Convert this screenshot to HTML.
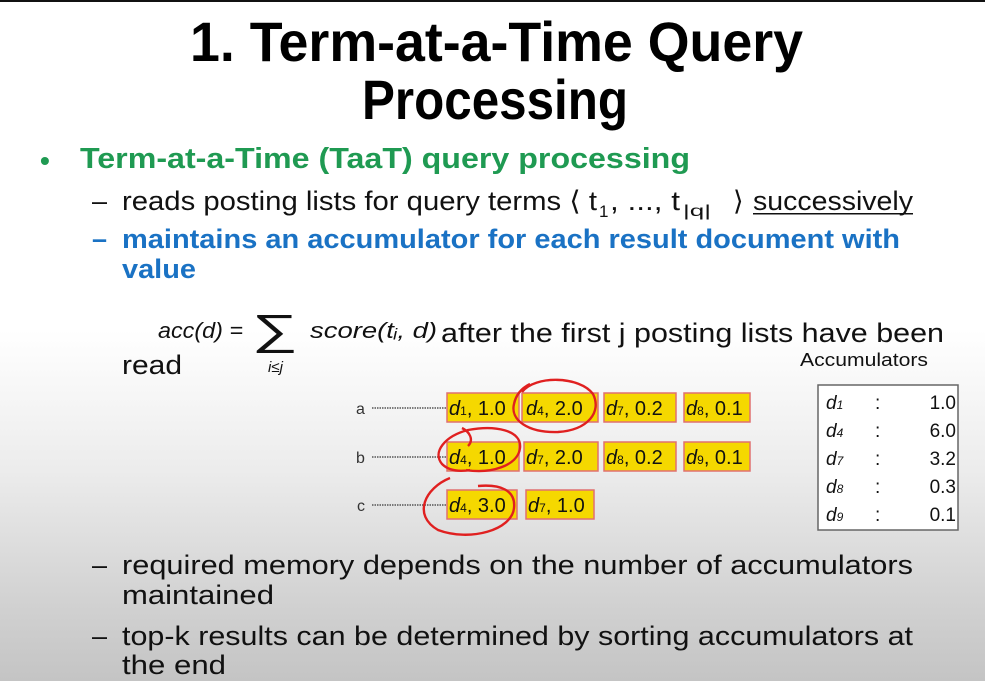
<!DOCTYPE html>
<html><head><style>
html,body{margin:0;padding:0;width:985px;height:681px;overflow:hidden}
body{background:linear-gradient(to bottom,#fff 0,#fff 330px,#ececec 470px,#d2d2d2 600px,#c4c4c4 681px);}
svg{position:absolute;left:0;top:0}
text{font-family:"Liberation Sans",sans-serif}
</style></head><body>
<svg width="985" height="681" viewBox="0 0 985 681">
<rect x="0" y="0" width="985" height="2" fill="#111"/>
<g font-weight="bold" fill="#000" font-size="56">
<text x="190" y="61" textLength="613" lengthAdjust="spacingAndGlyphs">1. Term-at-a-Time Query</text>
<text x="362" y="119" textLength="266" lengthAdjust="spacingAndGlyphs">Processing</text>
</g>
<text x="40" y="170" font-size="28" fill="#1f9a52" font-weight="bold">•</text>
<text x="80" y="168" font-size="29" fill="#1f9a52" font-weight="bold" textLength="610" lengthAdjust="spacingAndGlyphs">Term-at-a-Time (TaaT) query processing</text>
<g font-size="27" fill="#111">
<text x="92" y="210">–</text>
<text x="122" y="210" textLength="475" lengthAdjust="spacingAndGlyphs">reads posting lists for query terms ⟨ t</text>
<text x="599" y="217" font-size="17">1</text>
<text x="610" y="210" textLength="70" lengthAdjust="spacingAndGlyphs">, ..., t</text>
<text x="683" y="216" font-size="16" textLength="28" lengthAdjust="spacingAndGlyphs">|q|</text>
<text x="733" y="210">⟩</text>
<text x="753" y="210" textLength="160" lengthAdjust="spacingAndGlyphs">successively</text>
</g>
<rect x="753" y="213" width="160" height="1.5" fill="#111"/>
<g font-size="27" fill="#1a72c4" font-weight="bold">
<text x="92" y="248">–</text>
<text x="122" y="248" textLength="778" lengthAdjust="spacingAndGlyphs">maintains an accumulator for each result document with</text>
<text x="122" y="278" textLength="74" lengthAdjust="spacingAndGlyphs">value</text>
</g>
<g fill="#111">
<text x="158" y="338" font-family="Liberation Serif" font-style="italic" font-size="22" textLength="85" lengthAdjust="spacingAndGlyphs">acc(d) =</text>
<text x="252" y="344" font-family="Liberation Serif" font-size="42" textLength="46" lengthAdjust="spacingAndGlyphs">∑</text>
<text x="268" y="372" font-family="Liberation Serif" font-style="italic" font-size="15">i≤j</text>
<text x="310" y="338" font-family="Liberation Serif" font-style="italic" font-size="22" textLength="127" lengthAdjust="spacingAndGlyphs">score(tᵢ, d)</text>
<text x="441" y="342" font-size="27" textLength="503" lengthAdjust="spacingAndGlyphs">after the first j posting lists have been</text>
<text x="122" y="374" font-size="27" textLength="60" lengthAdjust="spacingAndGlyphs">read</text>
<text x="800" y="366" font-size="18" textLength="128" lengthAdjust="spacingAndGlyphs">Accumulators</text>
</g>
<g font-size="16" fill="#333">
<text x="356" y="414">a</text><text x="356" y="463">b</text><text x="357" y="511">c</text>
</g>
<g stroke="#555" stroke-width="1.5" stroke-dasharray="1.5 1">
<line x1="372" y1="408" x2="446" y2="408"/><line x1="372" y1="457" x2="446" y2="457"/><line x1="372" y1="505" x2="446" y2="505"/>
</g>
<g fill="#f5d800" stroke="#e07070" stroke-width="1.5">
<rect x="447" y="393" width="72" height="29"/><rect x="522" y="393" width="76" height="29"/><rect x="604" y="393" width="72" height="29"/><rect x="684" y="393" width="66" height="29"/>
<rect x="447" y="442" width="72" height="29"/><rect x="524" y="442" width="74" height="29"/><rect x="604" y="442" width="72" height="29"/><rect x="684" y="442" width="66" height="29"/>
<rect x="447" y="490" width="70" height="29"/><rect x="526" y="490" width="68" height="29"/>
</g>
<g font-size="20" fill="#111" font-family="Liberation Sans">
<text x="449" y="415"><tspan font-style="italic">d</tspan><tspan font-size="12">1</tspan>, 1.0</text>
<text x="526" y="415"><tspan font-style="italic">d</tspan><tspan font-size="12">4</tspan>, 2.0</text>
<text x="606" y="415"><tspan font-style="italic">d</tspan><tspan font-size="12">7</tspan>, 0.2</text>
<text x="686" y="415"><tspan font-style="italic">d</tspan><tspan font-size="12">8</tspan>, 0.1</text>
<text x="449" y="464"><tspan font-style="italic">d</tspan><tspan font-size="12">4</tspan>, 1.0</text>
<text x="526" y="464"><tspan font-style="italic">d</tspan><tspan font-size="12">7</tspan>, 2.0</text>
<text x="606" y="464"><tspan font-style="italic">d</tspan><tspan font-size="12">8</tspan>, 0.2</text>
<text x="686" y="464"><tspan font-style="italic">d</tspan><tspan font-size="12">9</tspan>, 0.1</text>
<text x="449" y="512"><tspan font-style="italic">d</tspan><tspan font-size="12">4</tspan>, 3.0</text>
<text x="528" y="512"><tspan font-style="italic">d</tspan><tspan font-size="12">7</tspan>, 1.0</text>
</g>
<g fill="none" stroke="#e02020" stroke-width="2.4">
<path d="M522,392 C535,375 580,376 593,394 C602,412 588,430 558,432 C528,433 510,420 514,404 C516,394 522,388 530,384"/>
<path d="M466,470 C490,474 518,466 520,448 C522,430 495,425 468,430 C445,436 432,452 442,464 C448,470 458,472 470,470 M462,428 C470,432 474,440 468,446"/>
<path d="M450,478 C425,488 412,515 438,530 C470,542 512,530 514,508 C516,490 500,484 478,486"/>
</g>
<rect x="818" y="385" width="140" height="145" fill="#fff" stroke="#666" stroke-width="1.5"/>
<g font-size="19" fill="#111">
<text x="826" y="409" font-family="Liberation Serif" font-style="italic">d<tspan font-size="12">1</tspan></text>
<text x="826" y="437" font-family="Liberation Serif" font-style="italic">d<tspan font-size="12">4</tspan></text>
<text x="826" y="465" font-family="Liberation Serif" font-style="italic">d<tspan font-size="12">7</tspan></text>
<text x="826" y="493" font-family="Liberation Serif" font-style="italic">d<tspan font-size="12">8</tspan></text>
<text x="826" y="521" font-family="Liberation Serif" font-style="italic">d<tspan font-size="12">9</tspan></text>
<text x="875" y="409">:</text><text x="875" y="437">:</text><text x="875" y="465">:</text><text x="875" y="493">:</text><text x="875" y="521">:</text>
<text x="956" y="409" text-anchor="end">1.0</text><text x="956" y="437" text-anchor="end">6.0</text><text x="956" y="465" text-anchor="end">3.2</text><text x="956" y="493" text-anchor="end">0.3</text><text x="956" y="521" text-anchor="end">0.1</text>
</g>
<g font-size="27" fill="#111">
<text x="92" y="574">–</text>
<text x="122" y="574" textLength="791" lengthAdjust="spacingAndGlyphs">required memory depends on the number of accumulators</text>
<text x="122" y="604" textLength="152" lengthAdjust="spacingAndGlyphs">maintained</text>
<text x="92" y="645">–</text>
<text x="122" y="645" textLength="791" lengthAdjust="spacingAndGlyphs">top-k results can be determined by sorting accumulators at</text>
<text x="122" y="674" textLength="104" lengthAdjust="spacingAndGlyphs">the end</text>
</g>
</svg>
</body></html>
